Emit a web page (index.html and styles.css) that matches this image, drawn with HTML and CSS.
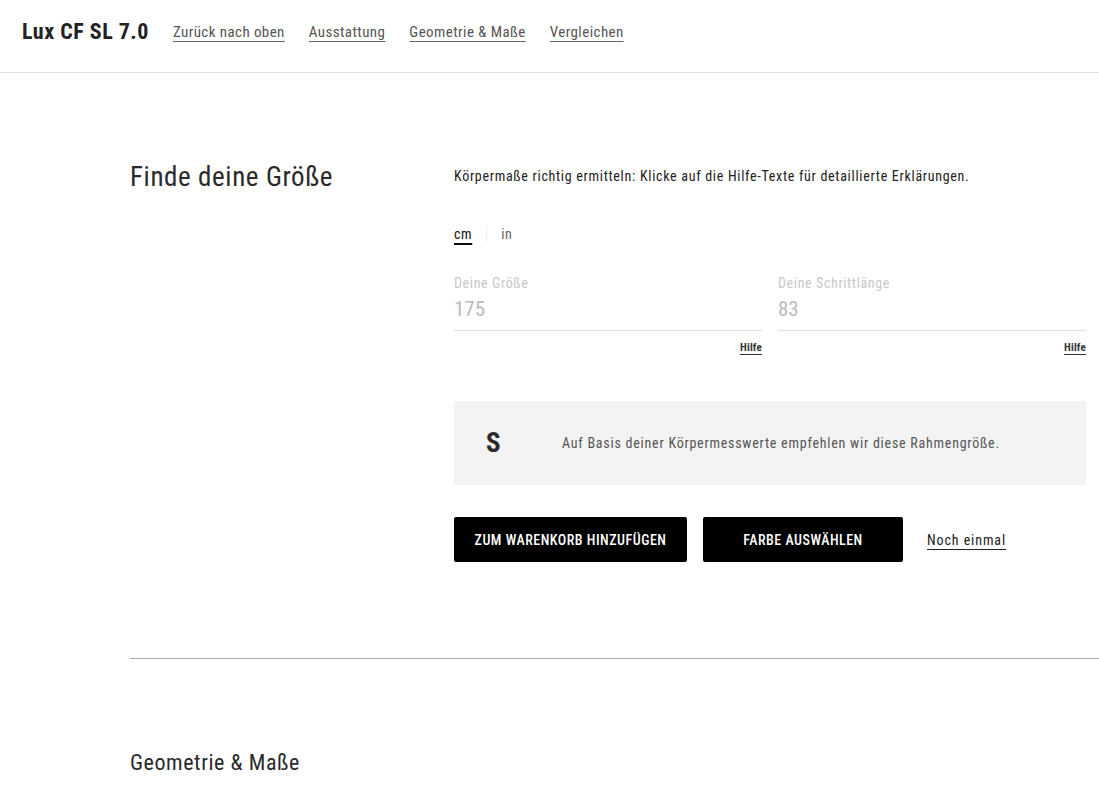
FILE: index.html
```html
<!DOCTYPE html>
<html lang="de">
<head>
<meta charset="utf-8">
<title>Lux CF SL 7.0</title>
<link rel="stylesheet" href="styles.css">
</head>
<body>
<header class="topbar">
  <div class="brand">Lux CF SL 7.0</div>
  <nav class="nav">
    <a href="#">Zurück nach oben</a>
    <a href="#">Ausstattung</a>
    <a href="#">Geometrie &amp; Maße</a>
    <a href="#">Vergleichen</a>
  </nav>
</header>

<main class="main">
  <section class="finder">
    <h2 class="finder-title">Finde deine Größe</h2>
    <div class="finder-body">
      <p class="intro">Körpermaße richtig ermitteln: Klicke auf die Hilfe-Texte für detaillierte Erklärungen.</p>
      <div class="units">
        <span class="unit active">cm</span>
        <span class="unit-sep"></span>
        <span class="unit">in</span>
      </div>
      <div class="fields">
        <div class="field">
          <div class="field-label">Deine Größe</div>
          <div class="field-value">175</div>
          <div class="field-help"><a href="#">Hilfe</a></div>
        </div>
        <div class="field">
          <div class="field-label">Deine Schrittlänge</div>
          <div class="field-value">83</div>
          <div class="field-help"><a href="#">Hilfe</a></div>
        </div>
      </div>
      <div class="result">
        <span class="result-size">S</span>
        <span class="result-text">Auf Basis deiner Körpermesswerte empfehlen wir diese Rahmengröße.</span>
      </div>
      <div class="actions">
        <button class="btn btn-cart">ZUM WARENKORB HINZUFÜGEN</button>
        <button class="btn btn-color">FARBE AUSWÄHLEN</button>
        <a href="#" class="again">Noch einmal</a>
      </div>
    </div>
  </section>
  <hr class="divider">
  <h2 class="geo-title">Geometrie &amp; Maße</h2>
</main>
</body>
</html>
```

FILE: styles.css
```css
* { box-sizing: border-box; }
html, body { margin: 0; padding: 0; background: #fff; }
body {
  font-family: Roboto, "Open Sans", "DejaVu Sans", sans-serif;
  font-stretch: 75%;
  color: #222;
  overflow: hidden;
}
.topbar {
  height: 73px;
  border-bottom: 1px solid #e0e0e0;
  display: flex;
  align-items: center;
  padding: 0 0 9px 22px;
}
.brand {
  font-size: 22px;
  font-weight: bold;
  color: #222;
  margin-right: 24px;
  letter-spacing: 0.5px;
}
.nav { display: flex; gap: 24px; }
.nav a {
  font-size: 15px;
  color: #555;
  letter-spacing: 0.42px;
  text-decoration: underline;
  text-underline-offset: 4px;
  text-decoration-color: #666;
}
.main { padding: 0 0 0 130px; }
.finder {
  display: flex;
  padding-top: 86px;
  padding-right: 13px;
}
.finder-title {
  margin: 0;
  width: 324px;
  font-size: 27px;
  font-weight: normal;
  color: #2a2a2a;
  line-height: 32px;
  padding-top: 2px;
  letter-spacing: 0.6px;
}
.finder-body { flex: 1; padding-top: 2px; }
.intro {
  margin: 6px 0 0;
  font-size: 14px;
  color: #222;
  line-height: 18px;
  letter-spacing: 0.7px;
}
.units {
  display: flex;
  align-items: center;
  margin-top: 40px;
  height: 18px;
}
.unit { font-size: 14px; color: #6a6460; letter-spacing: 0.6px; }
.unit.active {
  color: #111;
  text-decoration: underline;
  text-decoration-thickness: 2px;
  text-underline-offset: 4px;
}
.unit-sep {
  width: 1px;
  height: 16px;
  background: #eee;
  margin: 0 14px;
}
.fields {
  display: flex;
  gap: 16px;
  margin-top: 31px;
}
.field { flex: 1; }
.field-label { font-size: 14px; color: #c8c8c8; line-height: 18px; letter-spacing: 0.62px; }
.field-value {
  font-size: 21px;
  color: #bbb;
  line-height: 26px;
  padding: 4px 0 8px;
  border-bottom: 1px solid #ddd;
}
.field-help { text-align: right; margin-top: 8px; line-height: 14px; }
.field-help a {
  font-size: 11px;
  font-weight: bold;
  color: #333;
  letter-spacing: 0.2px;
  text-decoration: underline;
  text-underline-offset: 3px;
}
.result {
  margin-top: 46px;
  height: 84px;
  background: #f3f3f3;
  display: flex;
  align-items: center;
  padding-left: 32px;
}
.result-size {
  font-size: 27px;
  font-weight: bold;
  color: #2a2a2a;
  width: 76px;
}
.result-text { font-size: 14px; color: #555; letter-spacing: 0.76px; }
.actions {
  display: flex;
  align-items: center;
  gap: 16px;
  margin-top: 32px;
}
.btn {
  height: 45px;
  background: #000;
  color: #fff;
  border: none;
  border-radius: 2px;
  font-family: inherit;
  font-stretch: 75%;
  font-size: 14px;
  font-weight: 500;
  letter-spacing: 0.5px;
  padding: 0;
}
.btn-cart { width: 233px; }
.btn-color { width: 200px; }
.again {
  margin-left: 8px;
  font-size: 14px;
  color: #222;
  letter-spacing: 0.9px;
  text-decoration: underline;
  text-underline-offset: 4px;
}
.divider {
  margin: 96px 0 0;
  border: none;
  border-top: 1px solid #aaa;
}
.geo-title {
  margin: 90px 0 0;
  font-size: 22px;
  font-weight: normal;
  color: #2a2a2a;
  line-height: 28px;
  letter-spacing: 0.57px;
}
```
